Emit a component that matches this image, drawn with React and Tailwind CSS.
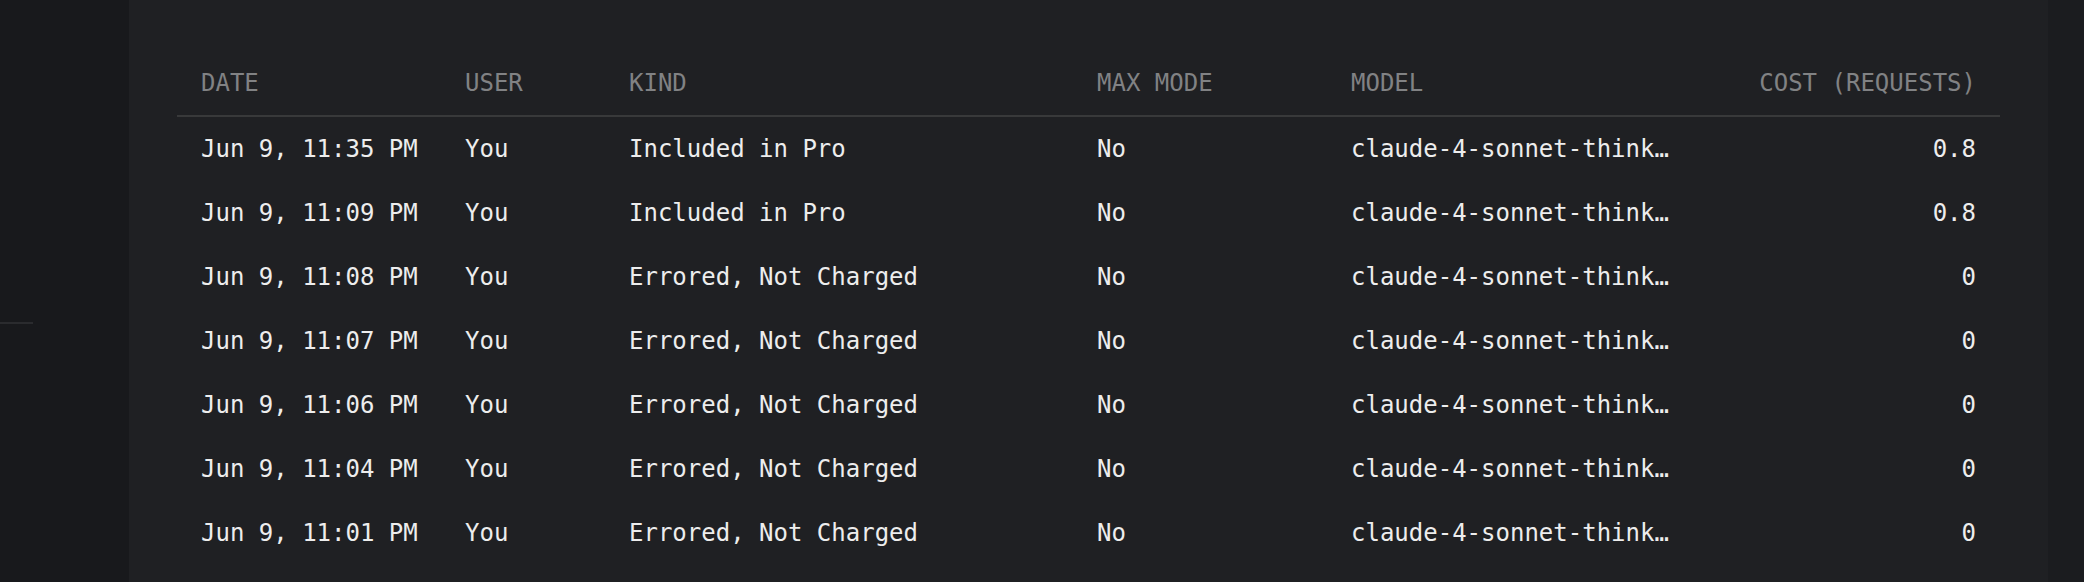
const ROWS = [
  { date: 'Jun 9, 11:35 PM', kind: 'Included in Pro', cost: '0.8' },
  { date: 'Jun 9, 11:09 PM', kind: 'Included in Pro', cost: '0.8' },
  { date: 'Jun 9, 11:08 PM', kind: 'Errored, Not Charged', cost: '0' },
  { date: 'Jun 9, 11:07 PM', kind: 'Errored, Not Charged', cost: '0' },
  { date: 'Jun 9, 11:06 PM', kind: 'Errored, Not Charged', cost: '0' },
  { date: 'Jun 9, 11:04 PM', kind: 'Errored, Not Charged', cost: '0' },
  { date: 'Jun 9, 11:01 PM', kind: 'Errored, Not Charged', cost: '0' },
]

const COLS = [
  { label: 'Date', cls: 'w-[264px]' },
  { label: 'User', cls: 'w-[164px]' },
  { label: 'Kind', cls: 'w-[468px]' },
  { label: 'Max Mode', cls: 'w-[254px]' },
  { label: 'Model', cls: 'w-[370px]' },
  { label: 'Cost (Requests)', cls: 'text-right' },
]

export default function App() {
  return (
    <div className="flex h-[582px] w-[2084px] overflow-hidden bg-[#1f2023] font-['DejaVu_Sans_Mono',monospace] text-[24px] leading-8">
      {/* sidebar */}
      <div className="w-[129px] shrink-0 bg-[#18191c] pt-[322px]">
        <div className="h-[2px] w-[33px] bg-[#2a2b2e]" />
      </div>

      {/* usage table */}
      <div className="flex-1 px-12 pt-[51px]">
        <table className="w-full table-fixed border-collapse">
          <thead>
            <tr className="border-b-2 border-[#38393a]">
              {COLS.map(c => (
                <th key={c.label}
                  className={`px-6 pt-4 pb-4 text-left font-normal uppercase whitespace-nowrap text-[#818284] ${c.cls}`}>
                  {c.label}
                </th>
              ))}
            </tr>
          </thead>
          <tbody>
            {ROWS.map((r, i) => (
              <tr key={i} className="text-[#ededed]">
                <td className="px-6 py-4 whitespace-nowrap">{r.date}</td>
                <td className="px-6 py-4">You</td>
                <td className="px-6 py-4 whitespace-nowrap">{r.kind}</td>
                <td className="px-6 py-4">No</td>
                <td className="px-6 py-4">
                  <div className="max-w-[322px] truncate">claude-4-sonnet-thinking</div>
                </td>
                <td className="px-6 py-4 text-right">{r.cost}</td>
              </tr>
            ))}
          </tbody>
        </table>
      </div>

      {/* scrollbar gutter */}
      <div className="w-[36px] shrink-0 bg-[#1b1c1f]" />
    </div>
  )
}
